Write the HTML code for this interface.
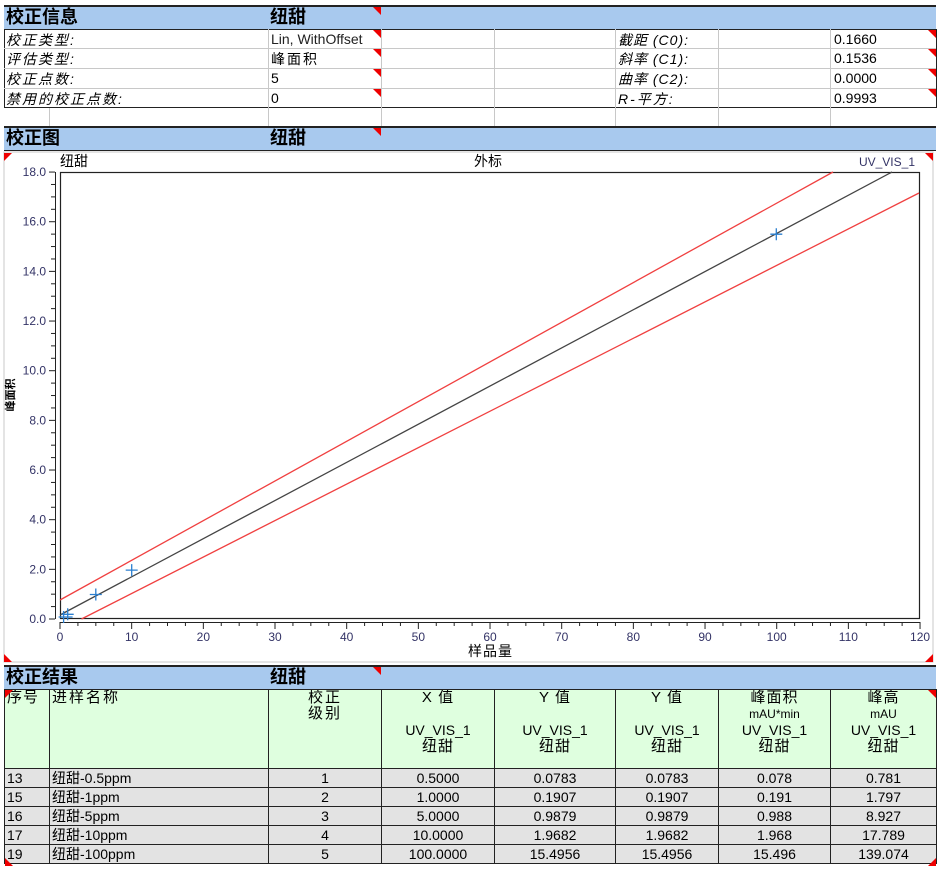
<!DOCTYPE html>
<html><head><meta charset="utf-8"><style>
body{margin:0;background:#fff;width:942px;height:870px;overflow:hidden;position:relative;font-family:"Liberation Sans","Noto Sans CJK SC",sans-serif;font-size:14px;color:#000}
.a{position:absolute;white-space:nowrap}
.band{position:absolute;left:4px;width:932px;height:22px;background:#a8c9ee;border-top:2px solid #222;border-bottom:1px solid #222}
.band b{position:absolute;top:-1px;font-size:18px;line-height:22px;font-weight:bold}
.tri{position:absolute;width:0;height:0;border-top:8px solid #e00;border-left:8px solid transparent}
.tl{position:absolute;width:0;height:0;border-top:8px solid #e00;border-right:8px solid transparent}
.bl{position:absolute;width:0;height:0;border-bottom:8px solid #e00;border-right:8px solid transparent}
.br{position:absolute;width:0;height:0;border-bottom:8px solid #e00;border-left:8px solid transparent}
.vl{position:absolute;width:1px;background:#c8c8c8}
.hl{position:absolute;height:1px;background:#c8c8c8}
.it{font-style:italic;letter-spacing:2px}
table{position:absolute;border-collapse:collapse;left:4px;top:689px;width:932px;table-layout:fixed}
td{border:1px solid #222;padding:0 2px;font-size:14px;line-height:16px;overflow:hidden;white-space:nowrap}
.hd td{background:#dfffdf;vertical-align:top;text-align:center;height:78px;letter-spacing:1px}
.dr td{background:#e3e3e3;height:18px;text-align:center;line-height:17px}
</style></head><body>
<div class="band" style="top:5px"><b style="left:2px">校正信息</b><b style="left:266px">纽甜</b></div>
<div class="tri" style="left:373px;top:7px"></div>
<div style="position:absolute;left:4px;top:29px;width:931px;height:78px;border:1px solid #222;border-top:none;border-bottom:1px solid #222"></div>
<div class="hl" style="left:4px;top:48px;width:932px"></div>
<div class="hl" style="left:4px;top:68px;width:932px"></div>
<div class="hl" style="left:4px;top:88px;width:932px"></div>
<div class="vl" style="left:268px;top:29px;height:98px"></div>
<div class="vl" style="left:381px;top:29px;height:98px"></div>
<div class="vl" style="left:494px;top:29px;height:98px"></div>
<div class="vl" style="left:615px;top:29px;height:98px"></div>
<div class="vl" style="left:718px;top:29px;height:98px"></div>
<div class="vl" style="left:830px;top:29px;height:98px"></div>
<div class="vl" style="left:49px;top:108px;height:20px"></div>
<div class="a it" style="left:6px;top:30px">校正类型:</div>
<div class="a it" style="left:6px;top:49px">评估类型:</div>
<div class="a it" style="left:6px;top:69px">校正点数:</div>
<div class="a it" style="left:6px;top:89px">禁用的校正点数:</div>
<div class="a" style="left:271px;top:31px;color:#222">Lin, WithOffset</div>
<div class="a" style="left:271px;top:49px;letter-spacing:2px">峰面积</div>
<div class="a" style="left:271px;top:70px">5</div>
<div class="a" style="left:271px;top:90px">0</div>
<div class="tri" style="left:373px;top:30px"></div><div class="tri" style="left:373px;top:49px"></div><div class="tri" style="left:373px;top:69px"></div><div class="tri" style="left:373px;top:89px"></div>
<div class="a it" style="left:618px;top:30px;letter-spacing:1px">截距 (C0):</div>
<div class="a it" style="left:618px;top:49px;letter-spacing:1px">斜率 (C1):</div>
<div class="a it" style="left:618px;top:69px;letter-spacing:1px">曲率 (C2):</div>
<div class="a it" style="left:618px;top:89px">R-平方:</div>
<div class="a" style="left:834px;top:31px">0.1660</div>
<div class="a" style="left:834px;top:50px">0.1536</div>
<div class="a" style="left:834px;top:70px">0.0000</div>
<div class="a" style="left:834px;top:90px">0.9993</div>
<div class="tri" style="left:928px;top:30px"></div><div class="tri" style="left:928px;top:49px"></div><div class="tri" style="left:928px;top:69px"></div><div class="tri" style="left:928px;top:89px"></div>

<div class="band" style="top:126px"><b style="left:2px">校正图</b><b style="left:266px">纽甜</b></div>
<div class="tri" style="left:373px;top:128px"></div>
<svg style="position:absolute;left:0;top:150px" width="942" height="515" viewBox="0 150 942 515">
<rect x="4" y="152" width="929" height="510" fill="#fff" stroke="#c8c8c8"/>
<polygon points="4,153 12,153 4,161" fill="#e00"/>
<polygon points="925,153 933,153 933,161" fill="#e00"/>
<polygon points="4,654 4,662 12,662" fill="#e00"/>
<polygon points="933,654 933,662 925,662" fill="#e00"/>
<g font-family="Liberation Sans, Noto Sans CJK SC, sans-serif" font-size="12">
<text x="60" y="166" font-size="14">纽甜</text>
<text x="474" y="166" font-size="14">外标</text>
<text x="915" y="166" text-anchor="end" fill="#333366">UV_VIS_1</text>
<text x="468" y="656" font-size="14" letter-spacing="1">样品量</text>
<text transform="translate(14,395) rotate(-90)" text-anchor="middle" font-size="11" font-weight="bold">峰面积</text>
</g>
<rect x="60.5" y="172.5" width="859" height="446" fill="none" stroke="#222" stroke-width="1.2"/>
<line x1="55.5" y1="172" x2="55.5" y2="619" stroke="#222"/>
<line x1="60" y1="622.5" x2="920" y2="622.5" stroke="#222"/>
<g stroke="#222" id="yt"></g>
<g stroke="#222" id="xt"></g>
<g id="yl" font-family="Liberation Sans, sans-serif" font-size="12" fill="#333366" text-anchor="end"></g>
<g id="xl" font-family="Liberation Sans, sans-serif" font-size="12" fill="#333366" text-anchor="middle"></g>
<line x1="60" y1="600" x2="833" y2="172" stroke="#f04040" stroke-width="1.3"/>
<line x1="81.5" y1="619" x2="919" y2="193" stroke="#f04040" stroke-width="1.3"/>
<line x1="60" y1="615" x2="892" y2="172" stroke="#444" stroke-width="1.3"/>
<g stroke="#2b7fcf" stroke-width="1.3" fill="none">
<path d="M58.6 617h14M63.6 611v12"/>
<path d="M61.7 614.3h12M67.7 608.3v12"/>
<path d="M89.8 594.5h12M95.8 588.5v12"/>
<path d="M125.7 570.1h12M131.7 564.1v12"/>
<path d="M770.3 234.2h12M776.3 228.2v12"/>
</g>
</svg>
<script>
var ns="http://www.w3.org/2000/svg";
function el(g,t,a,txt){var e=document.createElementNS(ns,t);for(var k in a)e.setAttribute(k,a[k]);if(txt)e.textContent=txt;document.getElementById(g).appendChild(e);}
for(var v=0;v<=18.001;v+=0.5){var y=619-v*24.83;var maj=Math.abs(v/2-Math.round(v/2))<0.01;el("yt","line",{x1:maj?49:51,x2:55,y1:y,y2:y});if(maj)el("yl","text",{x:46,y:y+4},v.toFixed(1));}
for(var x=0;x<=120.01;x+=2.5){var px=60+x*7.167;var maj=Math.abs(x/10-Math.round(x/10))<0.01;el("xt","line",{x1:px,x2:px,y1:622,y2:maj?629:626});if(maj)el("xl","text",{x:px,y:641},String(x));}
</script>

<div class="band" style="top:665px"><b style="left:2px">校正结果</b><b style="left:266px">纽甜</b></div>
<div class="tri" style="left:373px;top:667px"></div>
<table>
<colgroup><col style="width:45px"><col style="width:219px"><col style="width:113px"><col style="width:113px"><col style="width:121px"><col style="width:103px"><col style="width:112px"><col style="width:106px"></colgroup>
<tr class="hd"><td style="text-align:left;font-size:15px">序号</td><td style="text-align:left;font-size:15px;letter-spacing:2px">进样名称</td><td style="font-size:15px;letter-spacing:2px">校正<br>级别</td>
<td style="font-size:15px">X 值<br><br><span style="font-size:14px;letter-spacing:0">UV_VIS_1</span><br>纽甜</td>
<td style="font-size:15px">Y 值<br><br><span style="font-size:14px;letter-spacing:0">UV_VIS_1</span><br>纽甜</td>
<td style="font-size:15px">Y 值<br><br><span style="font-size:14px;letter-spacing:0">UV_VIS_1</span><br>纽甜</td>
<td style="font-size:15px">峰面积<br><span style="font-size:12px;letter-spacing:0">mAU*min</span><br><span style="font-size:14px;letter-spacing:0">UV_VIS_1</span><br>纽甜</td>
<td style="font-size:15px">峰高<br><span style="font-size:12px;letter-spacing:0">mAU</span><br><span style="font-size:14px;letter-spacing:0">UV_VIS_1</span><br>纽甜</td></tr>
<tr class="dr"><td style="text-align:left">13</td><td style="text-align:left">纽甜-0.5ppm</td><td>1</td><td>0.5000</td><td>0.0783</td><td>0.0783</td><td>0.078</td><td>0.781</td></tr>
<tr class="dr"><td style="text-align:left">15</td><td style="text-align:left">纽甜-1ppm</td><td>2</td><td>1.0000</td><td>0.1907</td><td>0.1907</td><td>0.191</td><td>1.797</td></tr>
<tr class="dr"><td style="text-align:left">16</td><td style="text-align:left">纽甜-5ppm</td><td>3</td><td>5.0000</td><td>0.9879</td><td>0.9879</td><td>0.988</td><td>8.927</td></tr>
<tr class="dr"><td style="text-align:left">17</td><td style="text-align:left">纽甜-10ppm</td><td>4</td><td>10.0000</td><td>1.9682</td><td>1.9682</td><td>1.968</td><td>17.789</td></tr>
<tr class="dr"><td style="text-align:left">19</td><td style="text-align:left">纽甜-100ppm</td><td>5</td><td>100.0000</td><td>15.4956</td><td>15.4956</td><td>15.496</td><td>139.074</td></tr>
</table>
<div class="tl" style="left:5px;top:690px"></div>
<div class="tri" style="left:928px;top:690px"></div>
<div class="bl" style="left:5px;top:858px"></div>
<div class="br" style="left:928px;top:858px"></div>
</body></html>
